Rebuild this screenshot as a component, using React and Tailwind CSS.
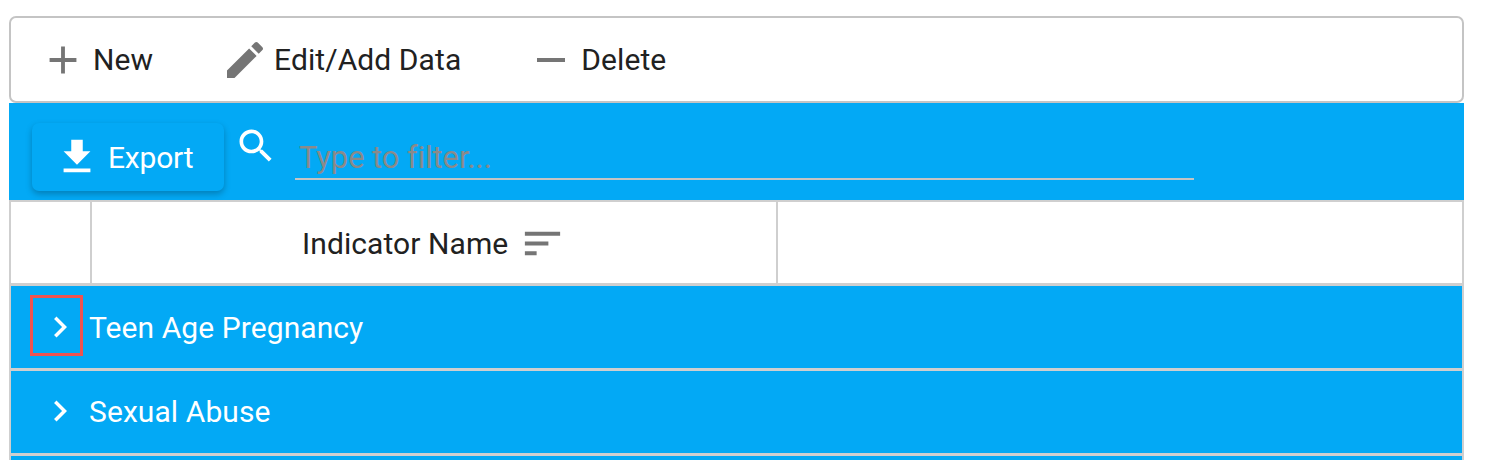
import React from 'react'

const Icon = ({ d, className }) => (
  <svg viewBox="0 0 24 24" className={className} fill="currentColor">
    <path d={d} />
  </svg>
)

const icons = {
  plus: 'M19 13h-6v6h-2v-6H5v-2h6V5h2v6h6v2z',
  edit: 'M3 17.25V21h3.75L17.81 9.94l-3.75-3.75L3 17.25zM20.71 7.04c.39-.39.39-1.02 0-1.41l-2.34-2.34c-.39-.39-1.02-.39-1.41 0l-1.83 1.83 3.75 3.75 1.83-1.83z',
  minus: 'M19 13H5v-2h14v2z',
  download: 'M19 9h-4V3H9v6H5l7 7 7-7zM5 18v2h14v-2H5z',
  search: 'M15.5 14h-.79l-.28-.27C15.41 12.59 16 11.11 16 9.5 16 5.91 13.09 3 9.5 3S3 5.91 3 9.5 5.91 16 9.5 16c1.61 0 3.09-.59 4.23-1.57l.27.28v.79l5 4.99L20.49 19l-4.99-5zm-6 0C7.01 14 5 11.99 5 9.5S7.01 5 9.5 5 14 7.01 14 9.5 11.99 14 9.5 14z',
  sort: 'M3 18h6v-2H3v2zM3 6v2h18V6H3zm0 7h12v-2H3v2z',
  chevron: 'M10 6L8.59 7.41 13.17 12l-4.58 4.59L10 18l6-6z',
}

const Row = ({ label, focused }) => (
  <div className={`h-[85px] flex items-center bg-[#03a9f5] border-b-[3px] border-[#cfcfcf] text-white ${focused ? '' : 'pb-[2px]'}`}>
    <div className={`ml-[19px] mb-[3px] w-[53px] h-[61px] flex items-center pl-[6px] border-[3px] ${focused ? 'border-[#ef5350]' : 'border-transparent'}`}>
      <Icon d={icons.chevron} className="mt-[3px] w-[42px] h-[42px] shrink-0" />
    </div>
    <span className="ml-[6px]">{label}</span>
  </div>
)

export default function App() {
  return (
    <div className="h-[460px] overflow-hidden bg-white pt-[16px] pl-[9px] text-[30px] tracking-[0.08px] text-[#212121] font-['Roboto',sans-serif]">
      <div className="w-[1455px]">
        {/* actions */}
        <div className="h-[87px] flex items-center border-2 border-[#c4c4c4] rounded-[7px] bg-white">
          <Icon d={icons.plus} className="ml-[29px] w-[46px] h-[46px] text-[#757575]" />
          <span className="ml-[7px]">New</span>
          <Icon d={icons.edit} className="ml-[68px] w-[48px] h-[48px] text-[#757575]" />
          <span className="ml-[5px]">Edit/Add Data</span>
          <Icon d={icons.minus} className="ml-[66px] w-[48px] h-[48px] text-[#757575]" />
          <span className="ml-[6px]">Delete</span>
        </div>

        {/* toolbar */}
        <div className="h-[97px] flex bg-[#03a9f5] text-white">
          <button className="ml-[23px] mt-[20px] w-[192px] h-[68px] flex items-center pl-[22px] gap-[8px] rounded-[7px] bg-[#03a9f5] tracking-[-0.2px] shadow-[0_3px_6px_rgba(0,0,0,0.25)]">
            <Icon d={icons.download} className="w-[46px] h-[46px]" />
            Export
          </button>
          <Icon d={icons.search} className="ml-[10px] mt-[21px] w-[44px] h-[44px]" />
          <div className="ml-[17px] mt-[36px] w-[899px] h-[41px] border-b-2 border-[#c4c4c4] pl-[4px] text-[31px] tracking-[-0.1px] leading-[38px] text-[#8a8a8a]">
            Type to filter...
          </div>
        </div>

        {/* table */}
        <div className="border-x-2 border-[#cfcfcf]">
          <div className="h-[86px] flex border-t-2 border-b-[3px] border-[#cfcfcf] bg-white">
            <div className="w-[81px] border-r-2 border-[#cfcfcf]" />
            <div className="w-[686px] border-r-2 border-[#cfcfcf] flex items-center pl-[210px] pt-[2px]">
              Indicator Name
              <Icon d={icons.sort} className="ml-[11px] w-[47px] h-[47px] text-[#757575]" />
            </div>
          </div>
          <Row label="Teen Age Pregnancy" focused />
          <Row label="Sexual Abuse" />
          <div className="h-[40px] bg-[#03a9f5]" />
        </div>
      </div>
    </div>
  )
}
